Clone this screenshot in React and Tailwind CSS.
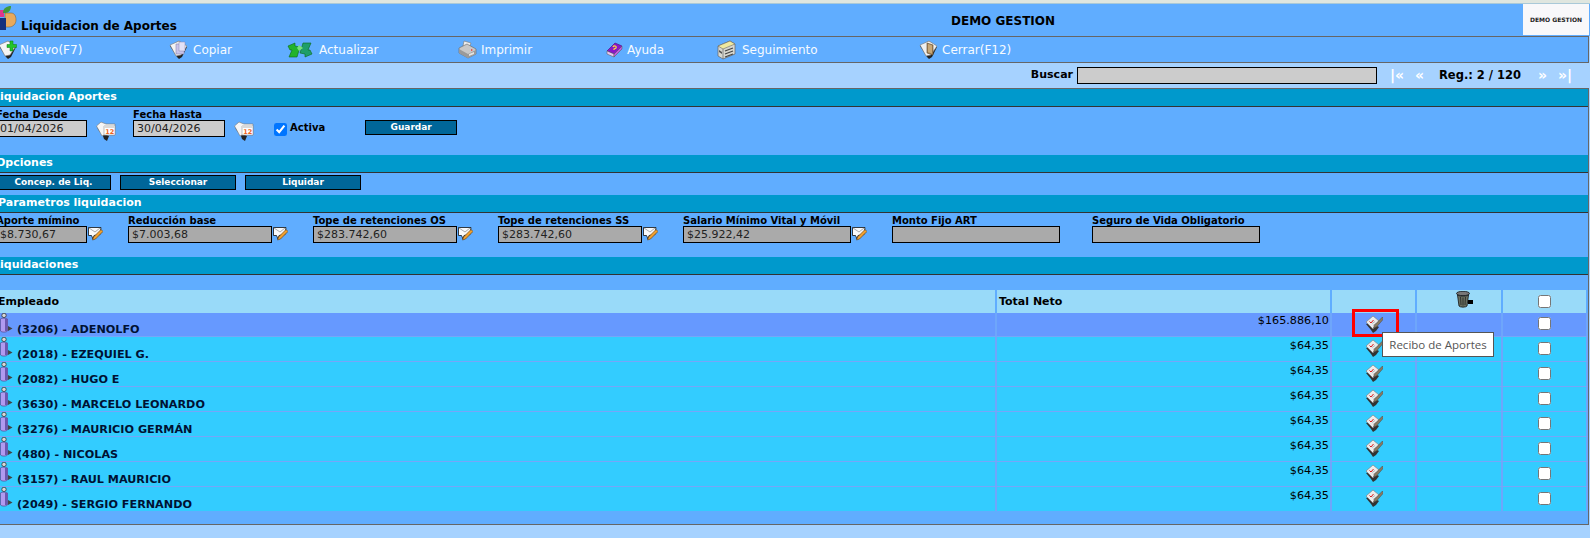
import React from "react";

const font = { fontFamily: '"DejaVu Sans", Verdana, sans-serif' };

function Logo() {
  return (
    <svg width="17" height="25" viewBox="0 0 17 25" className="shrink-0">
      <path d="M0 5h4v7H0z" fill="#e0358c" />
      <path d="M3 8C3 3 7 1 11 1c0 4-2 7-6 7z" fill="#3f9a3c" />
      <path d="M5 8h6c3.500 0 5 3 5 7s-3 7-7 7H5z" fill="#e8a95c" stroke="#7a5a2a" strokeWidth=".5" />
      <path d="M0 13h6v12H0z" fill="#14307e" />
    </svg>
  );
}

function Page({ children, fill = "#f4f4f4" }) {
  return (
    <svg width="19" height="20" viewBox="0 0 19 20" className="shrink-0">
      <path d="M1 6 10 1l8 6-5 10-3 2-2-2z" fill="#222" />
      <path d="M1 5 10 1l8 5-6 9-5 1z" fill={fill} stroke="#777" strokeWidth=".6" />
      {children}
    </svg>
  );
}

function NewIcon() {
  return (
    <Page>
      <path d="M9 4.500h3v-3.500h3v3.500h3.500v3H15v3.500h-3V7.500H9z" fill="#22c52c" stroke="#0b7a12" strokeWidth=".5" />
    </Page>
  );
}

function CopyIcon() {
  return (
    <Page>
      <path d="M7 4h8v10H7z" fill="#c9c4ea" stroke="#8a86b0" strokeWidth=".6" />
      <path d="M10 2h6v9h-6z" fill="#e4e2f6" stroke="#8a86b0" strokeWidth=".5" />
    </Page>
  );
}

function RefreshIcon() {
  return (
    <svg width="26" height="16" viewBox="0 0 26 16" className="shrink-0">
      <path d="M1 4l7-3v3l5 1-3 10H2l3-7H3z" fill="#22b32c" stroke="#0a6a14" strokeWidth=".6" />
      <path d="M25 12l-7 3v-3l-5-1 3-10h8l-3 7h2z" fill="#1f9e6a" stroke="#0a6a14" strokeWidth=".6" />
      <path d="M12 3l4 3-4 3-2-3z" fill="#76e07a" />
    </svg>
  );
}

function PrintIcon() {
  return (
    <svg width="19" height="19" viewBox="0 0 19 19" className="shrink-0">
      <path d="M6 1l7 2-2 5-6-2z" fill="#eee" stroke="#777" strokeWidth=".6" />
      <path d="M1 8l8-4 9 5v5l-8 4-9-5z" fill="#c8c8c8" stroke="#666" strokeWidth=".6" />
      <path d="M1 9l9 5 8-4v4l-8 4-9-5z" fill="#9a9a9a" />
      <path d="M11 14l5-2v2l-5 2z" fill="#e4e4e4" />
      <path d="M13 9l2 1-2 1z" fill="#e33" />
    </svg>
  );
}

function HelpIcon() {
  return (
    <svg width="17" height="16" viewBox="0 0 17 16" className="shrink-0">
      <path d="M1 9 9 1l7 3-8 8z" fill="#8a16c9" stroke="#4a0f70" strokeWidth=".6" />
      <path d="M1 9l7 3v3l-7-3z" fill="#e9c8f0" stroke="#555" strokeWidth=".5" />
      <path d="M8 12l8-8v3l-8 8z" fill="#c45ae0" stroke="#555" strokeWidth=".5" />
      <path d="M7 5c1-2 4-1 3 1l-2 1v1" fill="none" stroke="#ffe23a" strokeWidth="1.2" />
    </svg>
  );
}

function TrackIcon() {
  return (
    <svg width="19" height="20" viewBox="0 0 19 20" className="shrink-0">
      <path d="M1 6l12-5 5 3v10L6 19l-5-3z" fill="#d8d8d0" stroke="#666" strokeWidth=".7" />
      <path d="M1 6l5 3 12-5-5-3z" fill="#efe9a0" stroke="#666" strokeWidth=".6" />
      <path d="M6 9v10" stroke="#666" strokeWidth=".7" />
      <path d="M8 11l8-3M8 14l8-3M8 17l8-3" stroke="#444" strokeWidth="1.2" />
      <path d="M2 10l3 2v2l-3-2z" fill="#555" />
    </svg>
  );
}

function DoorIcon() {
  return (
    <Page fill="#f0f0f0">
      <path d="M8 3l6 2v10l-6-2z" fill="#a8875a" stroke="#5a4526" strokeWidth=".6" />
      <path d="M9 4l4 1.500v8L9 12z" fill="#c8a878" />
    </Page>
  );
}

function CalIcon() {
  return (
    <svg width="20" height="20" viewBox="0 0 20 20" className="shrink-0">
      <path d="M1 7l6 8 1 3 3 2 2-5-4-2z" fill="#222" />
      <path d="M0.500 5 5 1l5 2h9v11H8L6 15z" fill="#f6f6f6" stroke="#777" strokeWidth=".6" />
      <path d="M8 5h11v9H8z" fill="#fff" stroke="#999" strokeWidth=".6" />
      <path d="M8 5h11v2H8z" fill="#d9d9d9" />
      <text x="9.200" y="13.300" fontSize="6.500" fontWeight="700" fill="#f0641e" fontFamily="DejaVu Sans">12</text>
    </svg>
  );
}

function NoteIcon() {
  return (
    <svg width="15" height="15" viewBox="0 0 15 15" className="shrink-0">
      <path d="M.5 1.500h12.500l-1 7-6 1-1 3.500-1.500-3.500H.5z" fill="#fafafa" stroke="#111" strokeWidth=".8" />
      <path d="M1 2l6 4 5-4" fill="none" stroke="#888" strokeWidth=".7" />
      <path d="M13 3.500 5.500 11l-1 3 3-1L15 5.500z" fill="#f0a030" stroke="#5a3608" strokeWidth=".6" />
    </svg>
  );
}

function ReceiptIcon() {
  return (
    <svg width="18" height="18" viewBox="0 0 18 18" className="shrink-0">
      <path d="M1 9l5 6 2 3 3-2 3-4-8-4z" fill="#333" />
      <path d="M1 7l7-6 6 5-6 8z" fill="#ececec" stroke="#777" strokeWidth=".6" />
      <path d="M4.500 6.500l1.500 1.500 2.500-3" fill="none" stroke="#e01818" strokeWidth="1" />
      <path d="M7 8.500l3-2M8 10.500l3-2" stroke="#999" strokeWidth=".6" />
      <path d="M17.500 2l-8 8-1 3 3-1 7-8z" fill="#8a7a60" stroke="#444" strokeWidth=".5" />
    </svg>
  );
}

function PersonIcon() {
  return (
    <svg width="13" height="20" viewBox="0 0 13 20" className="shrink-0">
      <circle cx="4" cy="2.400" r="2.200" fill="#d8d8d8" stroke="#222" strokeWidth=".7" />
      <path d="M0.500 6c0-1 6-1 7 0v12c-1 1.500-6 1.500-7 0z" fill="#b09af0" stroke="#4a3a80" strokeWidth=".6" />
      <path d="M5 6h2.500v12H5z" fill="#6c56b0" />
      <path d="M8 13l4.500 2.500L8 18z" fill="#444" />
    </svg>
  );
}

function TrashIcon() {
  return (
    <svg width="18" height="17" viewBox="0 0 18 17" className="shrink-0">
      <path d="M12 9h5v4h-5z" fill="#000" />
      <ellipse cx="7" cy="2.500" rx="6.500" ry="2.200" fill="#777" stroke="#111" strokeWidth=".8" />
      <path d="M1.500 4l1.500 11c1 1.500 7 1.500 8 0L12.500 4c-2 1.500-9 1.500-11 0z" fill="#6a7060" stroke="#111" strokeWidth=".8" />
      <path d="M4.500 6l.5 8M7 6.500V14.500M9.500 6l-.5 8" stroke="#222" strokeWidth=".8" />
    </svg>
  );
}

function ToolItem({ width, gap, icon, label }) {
  return (
    <div className={`${width} ${gap} flex items-center shrink-0`}>
      {icon}
      <span className="text-[12px] text-[#f6fbff]">{label}</span>
    </div>
  );
}

function SectionHead({ children, className = "" }) {
  return (
    <div className="h-[18px] bg-[#0099cc] border-b border-[#333333] whitespace-nowrap overflow-hidden">
      <span className={`block text-[11px] leading-[16px] font-bold text-white ${className}`}>{children}</span>
    </div>
  );
}

function Field({ label, value, width, className = "", icon, inputBg = "bg-[#aaaaaa]" }) {
  return (
    <div className={`flex flex-col shrink-0 ${className}`}>
      <label className="pt-[1px] text-[10px] leading-[11px] font-bold text-black whitespace-nowrap">{label}</label>
      <div className="flex items-start gap-[1px]">
        <input
          readOnly
          value={value}
          className={`${width} ${inputBg} h-[17px] border border-black px-[3px] text-[11px] text-[#222222] outline-none`}
          style={font}
        />
        {icon}
      </div>
    </div>
  );
}

function Btn({ width, children }) {
  return (
    <button className={`${width} h-[15px] bg-[#006699] border border-black text-[9px] leading-[13px] font-bold text-white`} style={font}>
      {children}
    </button>
  );
}

const rows = [
  ["(3206) - ADENOLFO", "$165.886,10"],
  ["(2018) - EZEQUIEL G.", "$64,35"],
  ["(2082) - HUGO E", "$64,35"],
  ["(3630) - MARCELO LEONARDO", "$64,35"],
  ["(3276) - MAURICIO GERMÁN", "$64,35"],
  ["(480) - NICOLAS", "$64,35"],
  ["(3157) - RAUL MAURICIO", "$64,35"],
  ["(2049) - SERGIO FERNANDO", "$64,35"],
];

const cols = "grid grid-cols-[999px_333px_83px_84px_83px] gap-x-[2px]";

export default function App() {
  return (
    <div className="w-[1590px] h-[538px] overflow-hidden bg-[#a6d2ff] relative" style={font}>
      <div className="h-[4px] bg-[#dfe6df] border-b border-[#a9c9d8]" />

      <div className="h-[32px] bg-[#60adff] flex pr-[1px]">
        <div className="w-[951px] flex items-start shrink-0">
          <div className="mt-[1px]"><Logo /></div>
          <span className="ml-[4px] mt-[14px] text-[12px] leading-[16px] font-bold text-black">Liquidacion de Aportes</span>
        </div>
        <div className="flex-1 pt-[9px] text-[12px] leading-[16px] font-bold text-black">DEMO GESTION</div>
        <div className="w-[66px] h-[31px] bg-[#f8f8fa] flex items-center justify-center text-[6px] font-bold text-[#222222]">DEMO GESTION</div>
      </div>

      <div className="-ml-[3px] mr-[1px] h-[27px] bg-[#60adff] border border-[#666666] flex items-center">
        <ToolItem width="w-[171px]" gap="gap-[3px]" icon={<NewIcon />} label="Nuevo(F7)" />
        <ToolItem width="w-[118px]" gap="gap-[5px]" icon={<CopyIcon />} label="Copiar" />
        <ToolItem width="w-[171px]" gap="gap-[6px]" icon={<RefreshIcon />} label="Actualizar" />
        <ToolItem width="w-[148px]" gap="gap-[4px]" icon={<PrintIcon />} label="Imprimir" />
        <ToolItem width="w-[111px]" gap="gap-[4px]" icon={<HelpIcon />} label="Ayuda" />
        <ToolItem width="w-[202px]" gap="gap-[6px]" icon={<TrackIcon />} label="Seguimiento" />
        <ToolItem width="w-[150px]" gap="gap-[4px]" icon={<DoorIcon />} label="Cerrar(F12)" />
      </div>

      <div className="h-[25px] flex items-center justify-end pr-[19px]">
        <span className="text-[11px] font-bold text-black mr-[4px]">Buscar</span>
        <input readOnly className="w-[300px] h-[17px] bg-[#cccccc] border border-black outline-none" />
        <span className="ml-[13px] w-[25px] text-[14px] leading-[17px] font-bold text-white whitespace-nowrap">|«</span>
        <span className="w-[24px] text-[14px] leading-[17px] font-bold text-white">«</span>
        <span className="w-[99px] text-[11.500px] font-bold text-black whitespace-nowrap">Reg.: 2 / 120</span>
        <span className="w-[20px] text-[14px] leading-[17px] font-bold text-white">»</span>
        <span className="w-[13px] text-[14px] leading-[17px] font-bold text-white whitespace-nowrap">»|</span>
      </div>

      <div className="-ml-[4px] mr-[1px] h-[437px] bg-[#60adff] border-t border-r border-b border-[#666666] overflow-hidden">
        <SectionHead className="-ml-[3px]">Liquidacion Aportes</SectionHead>
        <div className="h-[48px] flex items-start pt-[1px]">
          <Field label="Fecha Desde" value="01/04/2026" width="w-[91px]" inputBg="bg-[#cccccc]" />
          <div className="ml-[9px] mt-[13px]"><CalIcon /></div>
          <Field className="ml-[17px]" label="Fecha Hasta" value="30/04/2026" width="w-[92px]" inputBg="bg-[#cccccc]" />
          <div className="ml-[9px] mt-[13px]"><CalIcon /></div>
          <input type="checkbox" defaultChecked className="ml-[20px] mt-[15px] w-[13px] h-[13px] accent-[#0075ff]" />
          <span className="ml-[3px] mt-[13px] text-[10px] leading-[13px] font-bold text-black">Activa</span>
          <div className="ml-[40px] mt-[12px] flex"><Btn width="w-[92px]">Guardar</Btn></div>
        </div>

        <SectionHead>Opciones</SectionHead>
        <div className="h-[22px] flex items-start pt-[2px] gap-[9px]">
          <Btn width="w-[115px]">Concep. de Liq.</Btn>
          <Btn width="w-[116px]">Seleccionar</Btn>
          <Btn width="w-[116px]">Liquidar</Btn>
        </div>

        <SectionHead className="ml-[2px]">Parametros liquidacion</SectionHead>
        <div className="h-[44px] flex items-start pt-[1px]">
          <Field label="Aporte mímino" value="$8.730,67" width="w-[91px]" icon={<NoteIcon />} />
          <Field className="ml-[25px]" label="Reducción base" value="$7.003,68" width="w-[144px]" icon={<NoteIcon />} />
          <Field className="ml-[25px]" label="Tope de retenciones OS" value="$283.742,60" width="w-[144px]" icon={<NoteIcon />} />
          <Field className="ml-[25px]" label="Tope de retenciones SS" value="$283.742,60" width="w-[144px]" icon={<NoteIcon />} />
          <Field className="ml-[25px]" label="Salario Mínimo Vital y Móvil" value="$25.922,42" width="w-[168px]" icon={<NoteIcon />} />
          <Field className="ml-[25px]" label="Monto Fijo ART" value="" width="w-[168px]" />
          <Field className="ml-[32px]" label="Seguro de Vida Obligatorio" value="" width="w-[168px]" />
        </div>

        <SectionHead className="-ml-[3px]">Liquidaciones</SectionHead>

        <div className="mt-[15px]">
          <div className={`${cols} h-[22px] bg-[#60adff]`}>
            <div className="bg-[#99daf9] pl-[2px] text-[11px] leading-[23px] font-bold text-black">Empleado</div>
            <div className="bg-[#99daf9] pl-[2px] text-[11px] leading-[23px] font-bold text-black">Total Neto</div>
            <div className="bg-[#99daf9]" />
            <div className="bg-[#99daf9] flex justify-center pt-[1px] pl-[12px]"><TrashIcon /></div>
            <div className="bg-[#99daf9] flex justify-center items-center"><input type="checkbox" className="w-[13px] h-[13px]" /></div>
          </div>

          <div className="mt-[1px] flex flex-col gap-y-[1px] bg-[#76a6f8]">
            {rows.map(([name, total], i) => {
              const bg = i === 0 ? "bg-[#6699ff]" : "bg-[#33ccff]";
              return (
                <div key={name} className={`${cols} ${i === 0 ? "h-[23px]" : "h-[24px]"} bg-[#6ea6fb]`}>
                  <div className={`${bg} flex items-end pl-[4px]`}>
                    <div className="self-start"><PersonIcon /></div>
                    <span className="ml-[4px] text-[11.200px] leading-[13px] font-bold text-[#001133] whitespace-nowrap">{name}</span>
                  </div>
                  <div className={`${bg} ${i === 0 ? "pt-[1px]" : "pt-[2px]"} pr-[1px] text-right text-[11.200px] leading-[14px] text-black`}>{total}</div>
                  <div className={`${bg} flex justify-center pt-[2px] relative`}>
                    <ReceiptIcon />
                    {i === 0 && (
                      <>
                        <div className="absolute left-[20px] top-[-4px] w-[47px] h-[28px] border-[3px] border-[#ff0000]" />
                        <div className="absolute left-[50px] top-[19px] z-10 w-[112px] h-[25px] bg-white border border-[#555555] text-[11.500px] leading-[23px] text-center text-[#555555] whitespace-nowrap" style={{ fontFamily: '"Open Sans", sans-serif' }}>
                          Recibo de Aportes
                        </div>
                      </>
                    )}
                  </div>
                  <div className={bg} />
                  <div className={`${bg} flex justify-center items-start ${i === 0 ? "pt-[4px]" : "pt-[5px]"}`}><input type="checkbox" className="w-[13px] h-[13px]" /></div>
                </div>
              );
            })}
          </div>
        </div>
      </div>
    </div>
  );
}
